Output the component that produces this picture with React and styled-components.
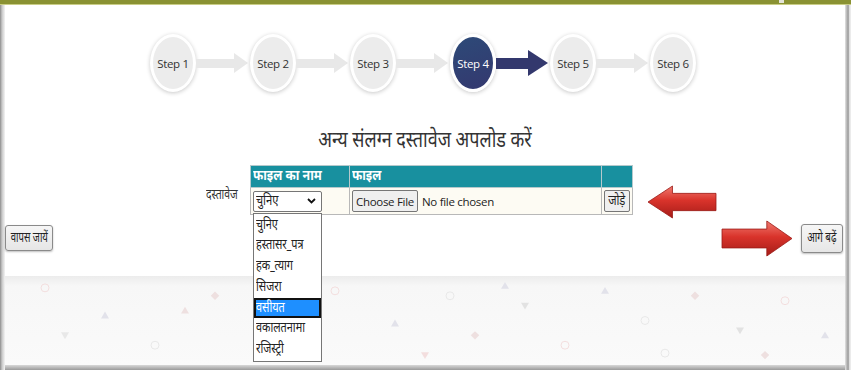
import React from "react";
import styled, { createGlobalStyle } from "styled-components";

const Global = createGlobalStyle`
  html, body { margin: 0; padding: 0; background: #fff; }
  body { font-family: "Open Sans", "Noto Sans Devanagari", "Lohit Devanagari", "Mangal", "FreeSans", sans-serif; color: #333; }
  #root { width: 851px; height: 370px; overflow: hidden; }
`;

const DEVA = `"Noto Sans Devanagari", "Lohit Devanagari", "Mangal", "FreeSans", "Noto Sans", sans-serif`;

const Page = styled.div`
  width: 851px;
  height: 370px;
  display: flex;
  flex-direction: column;
  overflow: hidden;
`;

const TopBar = styled.div`
  height: 4px;
  background: #8a9233;
  border-bottom: 1px solid #c9cd86;
  flex: none;
  display: flex;
  padding-left: 779px;
`;

const Nub = styled.span`
  width: 5px;
  height: 3px;
  background: #e4e4d8;
`;

const Frame = styled.div`
  flex: 1;
  display: flex;
  min-height: 0;
`;

const LeftEdge = styled.div`
  width: 5px;
  flex: none;
  background: linear-gradient(to right, #8c8c8c, #c8c8c8 40%, #f4f4f4);
`;

const RightEdge = styled.div`
  width: 6px;
  flex: none;
  background: linear-gradient(to right, #e4e4e4 0%, #b0b0b0 35%, #999 55%, #d8d8d8 68%, #f2f2f2 100%);
`;

const Main = styled.div`
  flex: 1;
  display: flex;
  flex-direction: column;
  position: relative;
  background: #fff;
`;

const Squeeze = styled.span`
  display: inline-block;
  flex: none;
  white-space: nowrap;
  transform: scaleX(${(p) => p.$s || 0.82});
  transform-origin: ${(p) => (p.$left ? "left center" : "center")};
`;

const Stepper = styled.div`
  display: flex;
  justify-content: center;
  align-items: center;
  padding-top: 29px;
  padding-right: 4px;
`;

const Circle = styled.div`
  width: 46px;
  height: 58px;
  border-radius: 50%;
  flex: none;
  display: flex;
  align-items: center;
  justify-content: center;
  font-family: "Open Sans", sans-serif;
  font-size: 11.5px;
  letter-spacing: -0.3px;
  box-sizing: border-box;
  border: 3px solid #fff;
  box-shadow: 0 1px 4px rgba(0, 0, 0, 0.22);
  background: ${(p) => (p.$active ? "linear-gradient(160deg, #2d4a78, #34386f)" : "#ececec")};
  color: ${(p) => (p.$active ? "#fff" : "#333")};
`;

const Connector = styled.div`
  width: 54px;
  flex: none;
  display: flex;
  align-items: center;
`;

const Bar = styled.div`
  flex: 1;
  height: ${(p) => (p.$active ? 11 : 9)}px;
  background: ${(p) => (p.$active ? "#33386d" : "#e8e8e8")};
`;

const Head = styled.div`
  width: 0;
  height: 0;
  border-top: ${(p) => (p.$active ? 13 : 10)}px solid transparent;
  border-bottom: ${(p) => (p.$active ? 13 : 10)}px solid transparent;
  border-left: ${(p) => (p.$active ? 20 : 14)}px solid ${(p) => (p.$active ? "#33386d" : "#e8e8e8")};
  margin-right: 2px;
`;

const Title = styled.h2`
  margin: 36px 0 0;
  text-align: center;
  font-family: ${DEVA};
  font-weight: 400;
  font-size: 23px;
  line-height: 27px;
  color: #333;
  transform: scaleX(0.78);
`;

const FormRow = styled.div`
  display: flex;
  align-items: flex-start;
  margin-top: 10px;
  padding-left: 198px;
  gap: 12px;
  position: relative;
`;

const Label = styled.div`
  width: 35px;
  display: flex;
  justify-content: flex-end;
  padding-top: 21px;
  font-family: ${DEVA};
  font-size: 14px;
  color: #333;
  & > span { transform-origin: right center; }
`;

const Table = styled.table`
  border-collapse: collapse;
  width: 383px;
  font-family: ${DEVA};
`;

const Th = styled.th`
  background: #18909f;
  color: #fff;
  font-weight: 700;
  font-size: 14px;
  text-align: left;
  height: 21px;
  padding: 0 2px;
  border: 1px solid #b5c9cc;
  width: ${(p) => p.$w || "auto"};
  & > span { transform-origin: left center; }
`;

const Td = styled.td`
  background: #fdfbf3;
  height: 26px;
  padding: 0 2px;
  border: 1px solid #b8b8b8;
  vertical-align: middle;
`;

const SelectWrap = styled.div`
  position: relative;
  width: 69px;
`;

const FakeSelect = styled.div`
  height: 21px;
  box-sizing: border-box;
  border: 1px solid #767676;
  border-radius: 2px;
  background: #fff;
  display: flex;
  align-items: center;
  justify-content: space-between;
  padding: 0 5px 0 2px;
  font-family: ${DEVA};
  font-size: 14px;
  color: #222;
`;

const List = styled.ul`
  position: absolute;
  left: 0;
  top: 22px;
  width: 69px;
  margin: 0;
  padding: 1px 0;
  list-style: none;
  background: #fff;
  border: 1px solid #767676;
  box-sizing: border-box;
  z-index: 5;
`;

const Item = styled.li`
  height: 20.8px;
  line-height: 21px;
  padding: 0 2px;
  font-family: ${DEVA};
  font-size: 14.5px;
  color: ${(p) => (p.$sel ? "#fff" : "#222")};
  background: ${(p) => (p.$sel ? "#1e8fff" : "transparent")};
  outline: ${(p) => (p.$sel ? "2px solid #111" : "none")};
  outline-offset: -2px;
  white-space: nowrap;
`;

const FileCell = styled.div`
  display: flex;
  align-items: center;
  gap: 4px;
`;

const Btn = styled.button`
  font-family: ${(p) => (p.$latin ? `"Open Sans", sans-serif` : DEVA)};
  font-size: ${(p) => (p.$latin ? "11.5px" : "14px")};
  letter-spacing: ${(p) => (p.$latin ? "-0.3px" : "0")};
  color: #222;
  height: 22px;
  width: ${(p) => (p.$w ? `${p.$w}px` : "auto")};
  padding: 0 3px;
  display: flex;
  align-items: center;
  justify-content: center;
  background: #efefef;
  border: 1px solid #767676;
  border-radius: 2px;
  white-space: nowrap;
`;

const NoFile = styled.span`
  font-family: "Open Sans", sans-serif;
  font-size: 11.5px;
  letter-spacing: -0.3px;
  color: #222;
`;

const NavRow = styled.div`
  display: flex;
  justify-content: space-between;
  align-items: center;
  margin-top: 8px;
  padding: 0 2px 0 0;
  height: 30px;
  position: relative;
`;

const NavBtn = styled.button`
  font-family: ${DEVA};
  font-size: 14px;
  color: #222;
  height: ${(p) => p.$h}px;
  width: ${(p) => p.$w}px;
  padding: 0;
  display: flex;
  align-items: center;
  justify-content: center;
  overflow: visible;
  background: linear-gradient(#f6f6f6, #e6e6e6);
  border: 1px solid #8a8a8a;
  border-radius: 3px;
  box-shadow: 0 1px 2px rgba(0, 0, 0, 0.25);
`;

const ArrowSvg = styled.svg`
  position: absolute;
  left: ${(p) => p.$x}px;
  top: ${(p) => p.$y}px;
  overflow: visible;
`;

const Footer = styled.div`
  flex: 1;
  margin-top: 23px;
  background: linear-gradient(#ececec, #f7f7f7 10px, #fafafa);
  position: relative;
  overflow: hidden;
`;

const Pattern = styled.svg`
  display: block;
  width: 100%;
  height: 100%;
`;

const BottomEdge = styled.div`
  height: 5px;
  flex: none;
  background: linear-gradient(#d8d8d8, #9a9a9a);
`;

function RedArrow({ dir, x, y, w, h, id }) {
  const sh = h * 0.27;
  const hl = w * 0.36;
  const mid = h / 2;
  const pts =
    dir === "left"
      ? `0,${mid} ${hl},0 ${hl},${mid - sh} ${w},${mid - sh} ${w},${mid + sh} ${hl},${mid + sh} ${hl},${h}`
      : `${w},${mid} ${w - hl},0 ${w - hl},${mid - sh} 0,${mid - sh} 0,${mid + sh} ${w - hl},${mid + sh} ${w - hl},${h}`;
  return (
    <ArrowSvg $x={x} $y={y} width={w} height={h} viewBox={`0 0 ${w} ${h}`}>
      <defs>
        <linearGradient id={id} x1="0" y1="0" x2="0" y2="1">
          <stop offset="0" stopColor="#f07a70" />
          <stop offset="0.45" stopColor="#d9332b" />
          <stop offset="1" stopColor="#a51c18" />
        </linearGradient>
      </defs>
      <polygon points={pts} fill={`url(#${id})`} stroke="#9b1b17" strokeWidth="0.8" />
    </ArrowSvg>
  );
}

const shapes = [
  [40, 12, "c"], [100, 40, "t"], [150, 70, "c"], [210, 20, "d"], [265, 55, "h"], [330, 15, "c"],
  [390, 48, "t"], [445, 20, "c"], [470, 60, "d"], [520, 30, "h"], [560, 70, "c"], [600, 15, "t"],
  [640, 45, "c"], [690, 20, "d"], [735, 55, "h"], [780, 25, "c"], [820, 60, "t"], [60, 60, "h"],
  [180, 35, "t"], [300, 75, "c"], [420, 80, "h"], [500, 10, "t"], [660, 78, "c"], [760, 80, "d"],
];
const colors = ["#f3dede", "#e2e2ea", "#e8e8e8", "#eee0e0", "#e2e2e2"];

function Shape({ x, y, k, c }) {
  if (k === "c") return <circle cx={x} cy={y} r="4" fill="none" stroke={c} strokeWidth="1" />;
  if (k === "t") return <polygon points={`${x},${y - 4} ${x + 4},${y + 3} ${x - 4},${y + 3}`} fill={c} />;
  if (k === "d") return <rect x={x - 3} y={y - 3} width="6" height="6" fill={c} transform={`rotate(45 ${x} ${y})`} />;
  return <path d={`M${x - 4} ${y - 3} h8 l-4 7 z`} fill={c} />;
}

const steps = [1, 2, 3, 4, 5, 6];
const options = ["चुनिए", "हस्तासर_पत्र", "हक_त्याग", "सिजरा", "वसीयत", "वकालतनामा", "रजिस्ट्री"];

export default function App() {
  return (
    <Page>
      <Global />
      <TopBar>
        <Nub />
      </TopBar>
      <Frame>
        <LeftEdge />
        <Main>
          <Stepper>
            {steps.map((s, i) => (
              <React.Fragment key={s}>
                <Circle $active={s === 4}>Step {s}</Circle>
                {i < steps.length - 1 && (
                  <Connector>
                    <Bar $active={s === 4} />
                    <Head $active={s === 4} />
                  </Connector>
                )}
              </React.Fragment>
            ))}
          </Stepper>
          <Title>अन्य संलग्न दस्तावेज अपलोड करें</Title>
          <FormRow>
            <Label>
              <Squeeze $s={0.74}>दस्तावेज</Squeeze>
            </Label>
            <Table>
              <thead>
                <tr>
                  <Th $w="94px">
                    <Squeeze $s={0.88}>फाइल का नाम</Squeeze>
                  </Th>
                  <Th>
                    <Squeeze $s={0.88}>फाइल</Squeeze>
                  </Th>
                  <Th $w="26px"></Th>
                </tr>
              </thead>
              <tbody>
                <tr>
                  <Td>
                    <SelectWrap>
                      <FakeSelect>
                        <Squeeze $s={0.8} $left>चुनिए</Squeeze>
                        <svg width="9" height="6" viewBox="0 0 9 6">
                          <path d="M1 1 L4.5 4.5 L8 1" fill="none" stroke="#111" strokeWidth="1.8" />
                        </svg>
                      </FakeSelect>
                      <List>
                        {options.map((o) => (
                          <Item key={o} $sel={o === "वसीयत"}>
                            <Squeeze $s={0.75} $left>{o}</Squeeze>
                          </Item>
                        ))}
                      </List>
                    </SelectWrap>
                  </Td>
                  <Td>
                    <FileCell>
                      <Btn $latin>Choose File</Btn>
                      <NoFile>No file chosen</NoFile>
                    </FileCell>
                  </Td>
                  <Td>
                    <Btn $w={26}>
                      <Squeeze $s={0.8}>जोड़े</Squeeze>
                    </Btn>
                  </Td>
                </tr>
              </tbody>
            </Table>
            <RedArrow dir="left" x={643} y={21} w={68} h={32} id="ga" />
          </FormRow>
          <NavRow>
            <NavBtn $w={48} $h={26}>
              <Squeeze $s={0.68}>वापस जायें</Squeeze>
            </NavBtn>
            <RedArrow dir="right" x={717} y={-2} w={70} h={35} id="gb" />
            <NavBtn $w={42} $h={29}>
              <Squeeze $s={0.7}>आगे बढ़ें</Squeeze>
            </NavBtn>
          </NavRow>
          <Footer>
            <Pattern viewBox="0 0 840 90" preserveAspectRatio="none">
              {shapes.map(([x, y, k], i) => (
                <Shape key={i} x={x} y={y} k={k} c={colors[i % colors.length]} />
              ))}
            </Pattern>
          </Footer>
          <BottomEdge />
        </Main>
        <RightEdge />
      </Frame>
    </Page>
  );
}
